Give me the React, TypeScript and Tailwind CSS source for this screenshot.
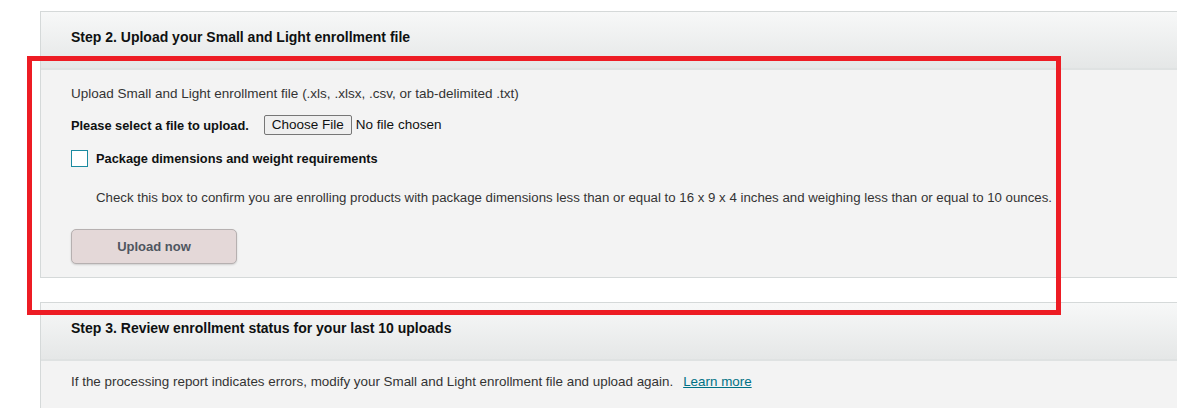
const font = { fontFamily: '"Liberation Sans", Arial, sans-serif' }

function PanelHeader({ title }: { title: string }) {
  return (
    <div className="h-[58px] flex items-center pb-[5px] pl-[30px] border-b-2 border-[#dfe2e2] bg-gradient-to-b from-[#f7f8f8] to-[#e5e7e7]">
      <h3 className="text-[14px] font-bold text-[#0f1111]">{title}</h3>
    </div>
  )
}

export default function App() {
  return (
    <div className="relative min-h-[408px] bg-white pt-[11px] pl-10 text-[13.5px] text-[#0f1111]" style={font}>
      <section className="border border-r-0 border-[#d5d9d9] bg-[#f3f3f3]">
        <PanelHeader title="Step 2. Upload your Small and Light enrollment file" />
        <div className="pl-[30px] pt-[15px] pb-[13px]">
          <p className="leading-[18px] text-[#333]">
            Upload Small and Light enrollment file (.xls, .xlsx, .csv, or tab-delimited .txt)
          </p>
          <div className="mt-[12px] flex items-center gap-[15px]">
            <span className="text-[12.8px] font-bold">Please select a file to upload.</span>
            <label className="flex items-center gap-[4px] text-[#0f1111]">
              <span className="px-[7px] h-[20px] flex items-center rounded-[2px] border border-[#767676] bg-[#efefef]">
                Choose File
              </span>
              <span>No file chosen</span>
            </label>
          </div>
          <div className="mt-[14px] flex items-center gap-[8px]">
            <span className="size-[17px] border border-[#1a8aa0] bg-white" />
            <span className="text-[12.8px] font-bold">Package dimensions and weight requirements</span>
          </div>
          <p className="mt-[20px] pl-[25px] text-[13.25px] text-[#333]">
            Check this box to confirm you are enrolling products with package dimensions less than or equal to 16 x 9 x 4 inches and weighing less than or equal to 10 ounces.
          </p>
          <button
            type="button"
            className="mt-[21px] w-[166px] h-[35px] rounded-[5px] border border-[#b6b0b0] bg-[#e4d8d8] text-[13px] font-bold text-[#4f5660] shadow-[0_1px_2px_rgba(0,0,0,0.15)]"
          >
            Upload now
          </button>
        </div>
      </section>

      <section className="mt-6 border border-r-0 border-b-0 border-[#d5d9d9] bg-[#f3f3f3]">
        <PanelHeader title="Step 3. Review enrollment status for your last 10 uploads" />
        <div className="pl-[30px] pt-[11px] pb-4 text-[13.4px] text-[#333]">
          If the processing report indicates errors, modify your Small and Light enrollment file and upload again.
          <a href="#" className="ml-[10px] text-[#007185] underline">Learn more</a>
        </div>
      </section>

      <div className="pointer-events-none absolute left-[27px] top-[56px] w-[1034px] h-[259px] border-[5px] border-[#ed1c24]" />
    </div>
  )
}
